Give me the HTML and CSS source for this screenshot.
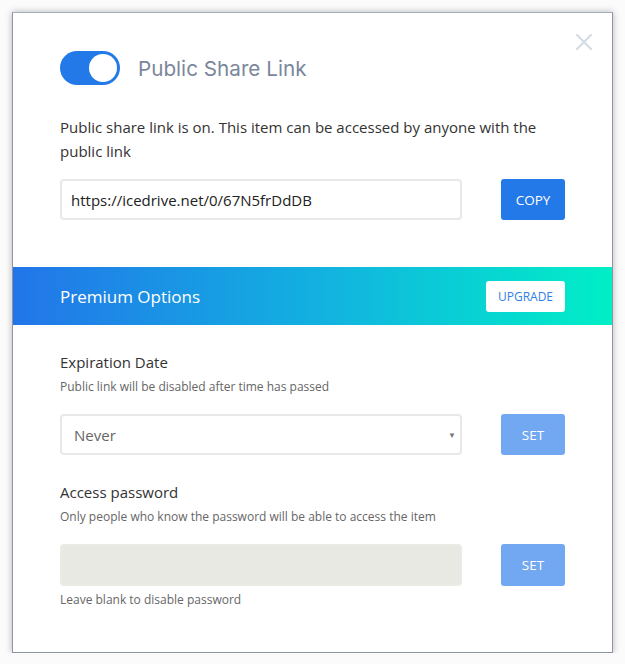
FILE: index.html
```html
<!DOCTYPE html>
<html lang="en">
<head>
    <meta charset="UTF-8">
    <title>Public Share Link</title>
    <link rel="stylesheet" href="styles.css">
</head>
<body>
    <div class="modal">
        <button type="button" class="closeBtn" aria-label="Close">
            <svg width="16" height="16" viewBox="0 0 16 16">
                <path d="M1 1 L15 15 M15 1 L1 15" stroke="#d6dce4" stroke-width="2.2" stroke-linecap="round"/>
            </svg>
        </button>

        <div class="section">
            <div class="share-head">
                <span class="toggle on"><span class="knob"></span></span>
                <h2>Public Share Link</h2>
            </div>

            <p class="intro">Public share link is on. This item can be accessed by anyone with the public link</p>

            <div class="field-row">
                <input type="text" class="field" value="https://icedrive.net/0/67N5frDdDB" readonly>
                <button type="button" class="actionBtn blue">COPY</button>
            </div>
        </div>

        <div class="premium-bar">
            <span class="premium-title">Premium Options</span>
            <button type="button" class="upgradeBtn">UPGRADE</button>
        </div>

        <div class="section premium">
            <div class="option">
                <label class="opt-label">Expiration Date</label>
                <p class="opt-hint">Public link will be disabled after time has passed</p>
                <div class="field-row">
                    <div class="select-wrap">
                        <select class="field" disabled>
                            <option>Never</option>
                        </select>
                        <span class="caret">&#9660;</span>
                    </div>
                    <button type="button" class="actionBtn light">SET</button>
                </div>
            </div>

            <div class="option">
                <label class="opt-label">Access password</label>
                <p class="opt-hint">Only people who know the password will be able to access the item</p>
                <div class="field-row">
                    <input type="password" class="field locked" disabled>
                    <button type="button" class="actionBtn light tall">SET</button>
                </div>
                <p class="opt-note">Leave blank to disable password</p>
            </div>
        </div>
    </div>
</body>
</html>
```

FILE: styles.css
```css
body {
    margin: 0;
    background-color: #fbfbfb;
    font-family: "Open Sans", Arial, sans-serif;
}

.modal {
    position: relative;
    box-sizing: border-box;
    width: 601px;
    height: 641px;
    margin: 12px 0 0 12px;
    background-color: white;
    border: 1px solid #8c94a6;
    border-top-color: #a7aebb;
    box-shadow: 0 0 7px rgba(0,0,0,0.28);
}

.closeBtn {
    position: absolute;
    top: 21px;
    right: 20px;
    padding: 0;
    border: none;
    background: none;
    cursor: pointer;
}

.section {
    padding: 0 47px;
}

.share-head {
    display: flex;
    align-items: center;
    gap: 18px;
    padding-top: 38px;
}

.toggle {
    position: relative;
    width: 60px;
    height: 34px;
    border-radius: 17px;
    background-color: #2479e8;
}

.toggle .knob {
    position: absolute;
    top: 3px;
    right: 3px;
    width: 28px;
    height: 28px;
    border-radius: 50%;
    background-color: white;
}

.share-head h2 {
    margin: 0;
    font-family: Inter, sans-serif;
    font-size: 20.7px;
    font-weight: 400;
    color: #7b869b;
}

.intro {
    margin: 30px 0 16px;
    font-size: 15px;
    line-height: 24px;
    color: #333;
}

.field-row {
    display: flex;
    justify-content: space-between;
    align-items: center;
}

.field {
    box-sizing: border-box;
    width: 402px;
    height: 41px;
    padding: 0 9px;
    border: 2px solid #e8e8e8;
    border-radius: 4px;
    background-color: white;
    font-family: "Open Sans", Arial, sans-serif;
    font-size: 15px;
    color: #222;
}

.actionBtn {
    width: 64px;
    height: 41px;
    border: none;
    border-radius: 3px;
    color: white;
    font-family: "Open Sans", Arial, sans-serif;
    font-size: 13.5px;
    cursor: pointer;
}

.blue {
    background-color: #2479e8;
}

.light {
    background-color: #71a8f1;
}

.premium-bar {
    display: flex;
    justify-content: space-between;
    align-items: center;
    height: 58px;
    margin-top: 47px;
    padding: 0 47px;
    background: linear-gradient(90deg, #2275e9 0%, #11b6df 55%, #00efc6 100%);
}

.premium-title {
    font-size: 17px;
    color: white;
}

.upgradeBtn {
    width: 79px;
    height: 31px;
    border: none;
    border-radius: 3px;
    background-color: white;
    color: #2f7fe6;
    font-family: "Open Sans", Arial, sans-serif;
    font-size: 12px;
    cursor: pointer;
}

.premium {
    padding-top: 26px;
}

.option {
    margin-bottom: 26px;
}

.opt-label {
    display: block;
    font-size: 15px;
    line-height: 22px;
    color: #333;
}

.opt-hint {
    margin: 4px 0 17px;
    font-size: 12px;
    line-height: 20px;
    color: #666;
}

.opt-note {
    margin: 4px 0 0;
    font-size: 12px;
    line-height: 20px;
    color: #666;
}

.select-wrap {
    position: relative;
}

select.field {
    appearance: none;
    padding-left: 12px;
    color: #666;
    opacity: 1;
}

.caret {
    position: absolute;
    top: 15px;
    right: 6px;
    font-size: 8px;
    color: #777;
}

.field.locked {
    height: 42px;
    background-color: #e9e9e3;
    border-color: #ebebe6;
}

.tall {
    height: 42px;
}
```
